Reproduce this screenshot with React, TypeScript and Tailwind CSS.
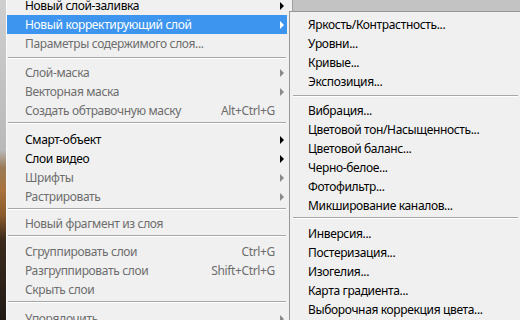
import React from "react";

type Item =
  | { kind: "item"; label: string; sub?: boolean; shortcut?: string; disabled?: boolean; active?: boolean }
  | { kind: "sep"; pt: number; pb: number };

const FONT = { fontFamily: '"Noto Sans", "DejaVu Sans", sans-serif' };

const Arrow = ({ color }: { color: string }) => (
  <svg width="5" height="8" viewBox="0 0 5 8" className="block">
    <polygon points="0,0 4,4 0,8" fill={color} />
  </svg>
);

const mainItems: Item[] = [
  { kind: "item", label: "Новый слой-заливка", sub: true },
  { kind: "item", label: "Новый корректирующий слой", sub: true, active: true },
  { kind: "item", label: "Параметры содержимого слоя...", disabled: true },
  { kind: "sep", pt: 4, pb: 4 },
  { kind: "item", label: "Слой-маска", sub: true, disabled: true },
  { kind: "item", label: "Векторная маска", sub: true, disabled: true },
  { kind: "item", label: "Создать обтравочную маску", shortcut: "Alt+Ctrl+G", disabled: true },
  { kind: "sep", pt: 2, pb: 6 },
  { kind: "item", label: "Смарт-объект", sub: true },
  { kind: "item", label: "Слои видео", sub: true },
  { kind: "item", label: "Шрифты", sub: true, disabled: true },
  { kind: "item", label: "Растрировать", sub: true, disabled: true },
  { kind: "sep", pt: 2, pb: 4 },
  { kind: "item", label: "Новый фрагмент из слоя", disabled: true },
  { kind: "sep", pt: 2, pb: 5 },
  { kind: "item", label: "Сгруппировать слои", shortcut: "Ctrl+G", disabled: true },
  { kind: "item", label: "Разгруппировать слои", shortcut: "Shift+Ctrl+G", disabled: true },
  { kind: "item", label: "Скрыть слои", disabled: true },
  { kind: "sep", pt: 2, pb: 6 },
  { kind: "item", label: "Упорядочить", sub: true, disabled: true },
];

const subItems: Item[] = [
  { kind: "item", label: "Яркость/Контрастность..." },
  { kind: "item", label: "Уровни..." },
  { kind: "item", label: "Кривые..." },
  { kind: "item", label: "Экспозиция..." },
  { kind: "sep", pt: 4, pb: 4 },
  { kind: "item", label: "Вибрация..." },
  { kind: "item", label: "Цветовой тон/Насыщенность..." },
  { kind: "item", label: "Цветовой баланс..." },
  { kind: "item", label: "Черно-белое..." },
  { kind: "item", label: "Фотофильтр..." },
  { kind: "item", label: "Микширование каналов..." },
  { kind: "sep", pt: 2, pb: 5 },
  { kind: "item", label: "Инверсия..." },
  { kind: "item", label: "Постеризация..." },
  { kind: "item", label: "Изогелия..." },
  { kind: "item", label: "Карта градиента..." },
  { kind: "item", label: "Выборочная коррекция цвета..." },
];

function Sep({ pt, pb, inset }: { pt: number; pb: number; inset: string }) {
  return (
    <div style={{ paddingTop: pt, paddingBottom: pb }} className={`shrink-0 ${inset}`}>
      <div className="h-px bg-[#a7a7a7]" />
      <div className="h-px bg-[#ffffff]" />
    </div>
  );
}

function Row({ it }: { it: Extract<Item, { kind: "item" }> }) {
  const color = it.active ? "text-white" : it.disabled ? "text-[#6d6d6d]" : "text-black";
  const arrowColor = it.active ? "#ffffff" : it.disabled ? "#8a8a8a" : "#000000";
  return (
    <div
      className={`h-[19px] shrink-0 flex items-center pl-[18px] text-[12px] tracking-[-0.35px] leading-none whitespace-nowrap ${color} ${
        it.active ? "bg-[#3d95f0]" : ""
      }`}
    >
      <span className="flex-1">{it.label}</span>
      {it.shortcut && <span>{it.shortcut}</span>}
      <span className="w-[12px] flex items-center pl-[5px]">{it.sub && <Arrow color={arrowColor} />}</span>
    </div>
  );
}

export default function App() {
  return (
    <div className="w-[520px] h-[320px] overflow-hidden relative bg-[#c3c3c3] flex items-start" style={FONT}>
      <div className="w-[6px] h-[320px] shrink-0 bg-[linear-gradient(to_bottom,#cfcfcf_0px,#b9b9b9_150px,#9a7a55_168px,#a9733c_190px,#8a5a2c_215px,#3b2a1c_240px,#201a16_320px)]" />
      <div className="w-[287px] shrink-0 -mt-[4px] bg-[#f0f0f0] border-l border-l-[#fafafa] border-r border-r-[#a0a0a0] pr-[5px] flex flex-col">
        {mainItems.map((it, i) =>
          it.kind === "sep" ? (
            <Sep key={i} pt={it.pt} pb={it.pb} inset="mx-[1px]" />
          ) : (
            <Row key={i} it={it} />
          )
        )}
      </div>
      <div className="absolute left-[289px] top-[11px] right-0 bg-[#f0f0f0] border-l border-t border-[#979797] pt-[3px] pb-[4px] flex flex-col">
        {subItems.map((it, i) =>
          it.kind === "sep" ? (
            <Sep key={i} pt={it.pt} pb={it.pb} inset="ml-[3px] mr-[2px]" />
          ) : (
            <Row key={i} it={it} />
          )
        )}
      </div>
    </div>
  );
}
